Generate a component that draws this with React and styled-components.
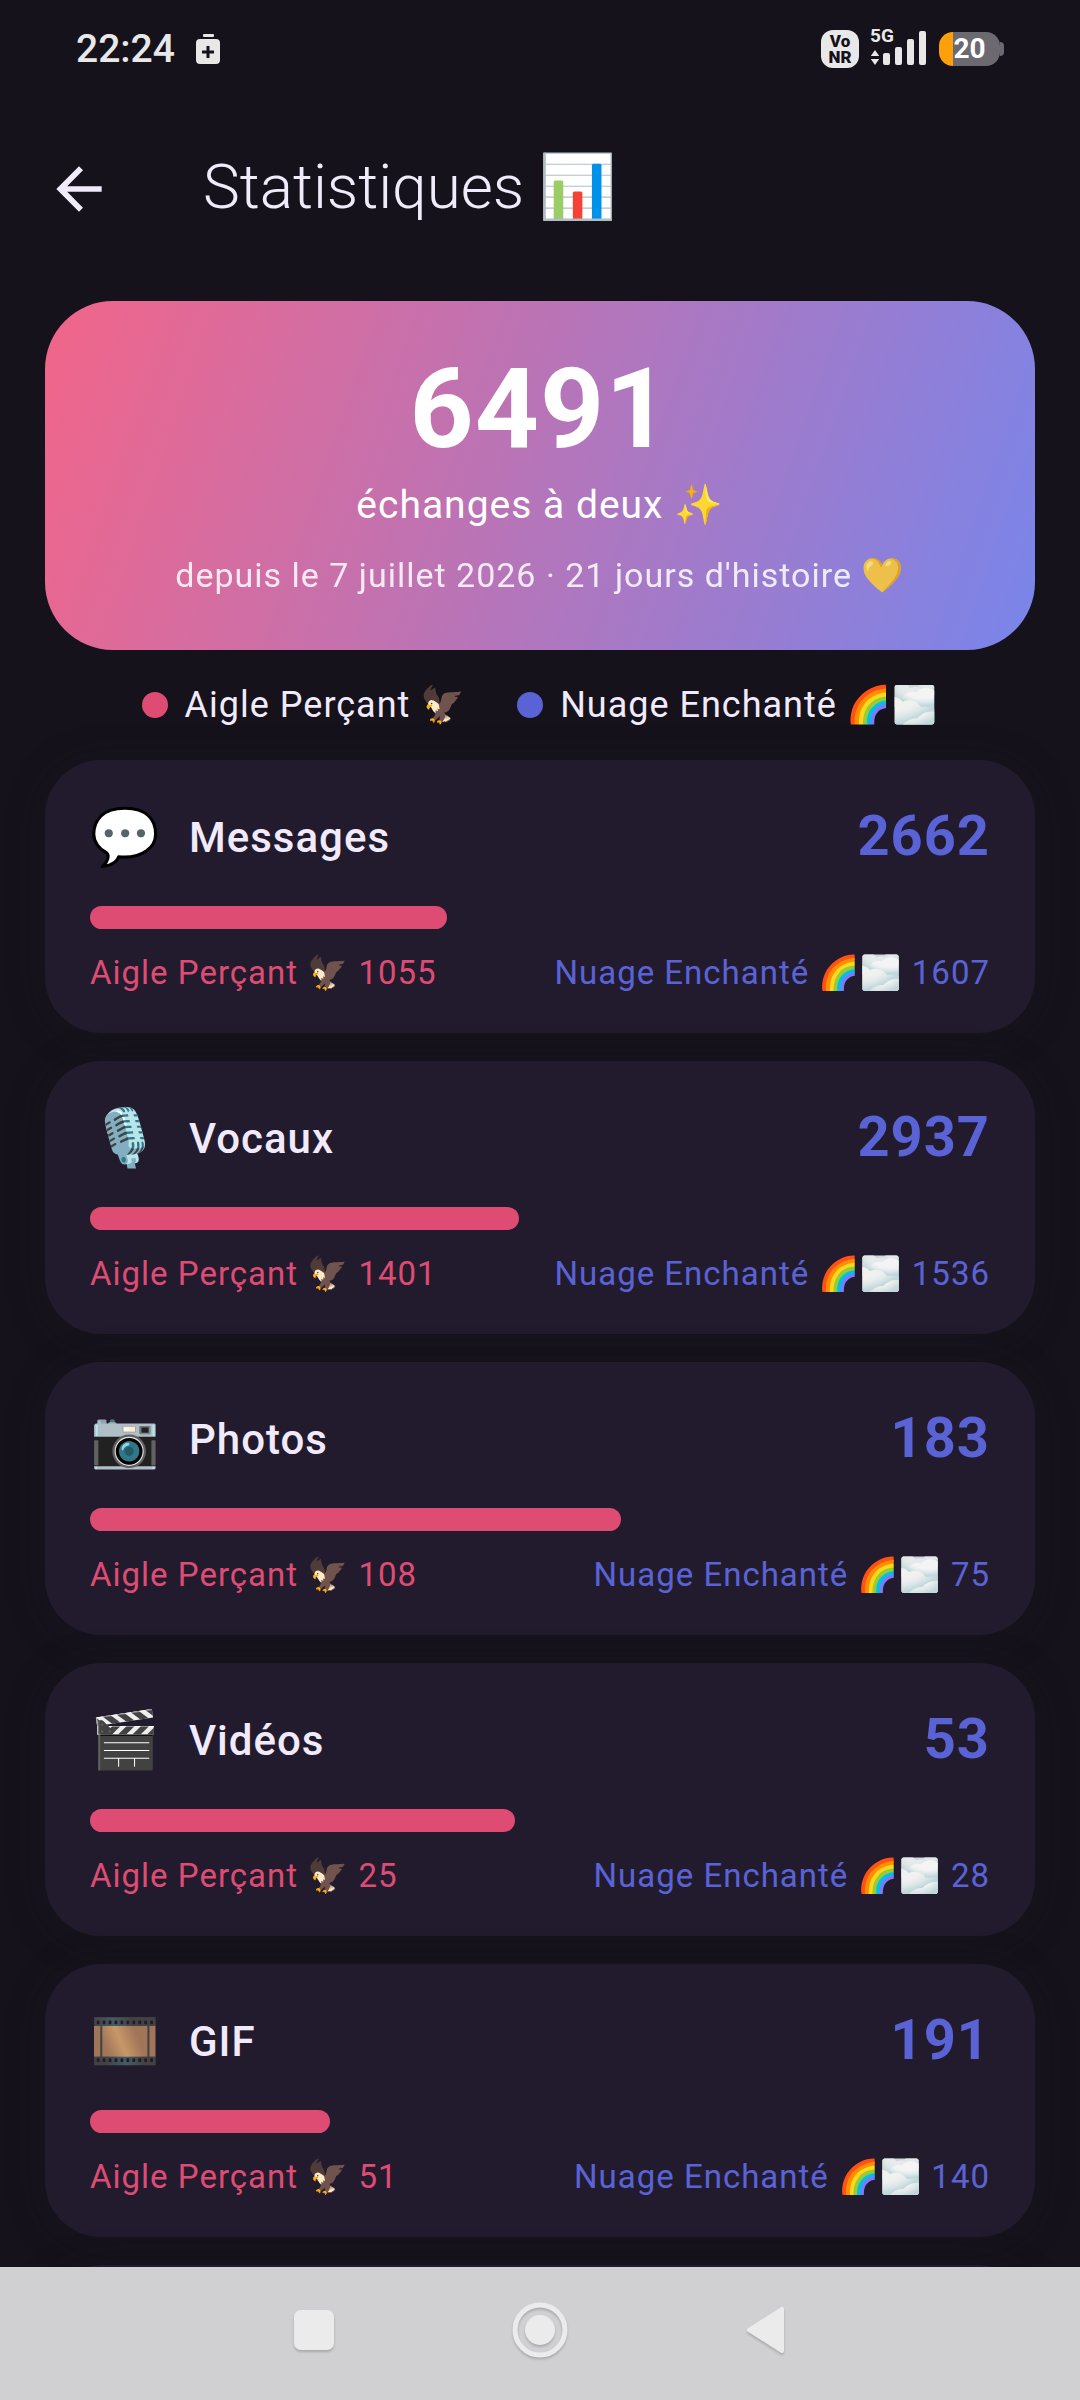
import styled, { createGlobalStyle } from "styled-components";

const AIGLE = "Aigle Perçant 🦅";
const NUAGE = "Nuage Enchanté 🌈🌫️";

const stats = [
  { icon: "💬", name: "Messages", aigle: 1055, nuage: 1607 },
  { icon: "🎙️", name: "Vocaux", aigle: 1401, nuage: 1536 },
  { icon: "📷", name: "Photos", aigle: 108, nuage: 75 },
  { icon: "🎬", name: "Vidéos", aigle: 25, nuage: 28 },
  { icon: "🎞️", name: "GIF", aigle: 51, nuage: 140 },
];

const GlobalStyle = createGlobalStyle`
  :root {
    --bg: #15121b;
    --card: #221b2e;
    --text: #f1eafa;
    --pink: #de4c74;
    --blue: #5a63d6;
  }
  * {
    box-sizing: border-box;
  }
  body {
    margin: 0;
    background: var(--bg);
    color: var(--text);
    font-family: Roboto, "Noto Color Emoji", sans-serif;
  }
  h1, h2, p, ul {
    margin: 0;
    padding: 0;
  }
  button {
    border: none;
    padding: 0;
    background: none;
    color: inherit;
    font: inherit;
  }
`;

const Screen = styled.div`
  height: 100vh;
  display: flex;
  flex-direction: column;
`;

const StatusBar = styled.div`
  flex: none;
  height: 98px;
  padding: 0 76px;
  display: flex;
  justify-content: space-between;
  align-items: center;
  color: #e8e8e8;
`;

const StatusGroup = styled.div`
  display: flex;
  align-items: center;
  gap: ${(props) => props.$gap}px;
`;

const Clock = styled.time`
  font-size: 39px;
  font-weight: 500;
  line-height: 48px;
`;

const VonrBadge = styled.div`
  width: 38px;
  height: 38px;
  border-radius: 12px;
  display: flex;
  flex-direction: column;
  justify-content: center;
  align-items: center;
  background: #e8e8e8;
  color: var(--bg);
  font-size: 17px;
  font-weight: 900;
  line-height: 16px;
`;

const Battery = styled.div`
  display: flex;
  align-items: center;
`;

const BatteryBody = styled.div`
  width: 61px;
  height: 34px;
  border-radius: 14px;
  display: flex;
  justify-content: center;
  align-items: center;
  background: linear-gradient(90deg, #ff9f0a 14px, #6b6a71 14px);
  color: #fff;
  font-size: 28px;
  font-weight: 700;
  line-height: 34px;
`;

const BatteryTip = styled.div`
  width: 4px;
  height: 14px;
  border-radius: 0 4px 4px 0;
  background: #6b6a71;
`;

const Header = styled.header`
  flex: none;
  height: 181px;
  padding: 0 45px;
  display: flex;
  align-items: center;
  gap: 90px;
`;

const BackButton = styled.button`
  width: 68px;
  height: 68px;
  display: flex;
  align-items: center;
`;

const Title = styled.h1`
  padding-bottom: 4px;
  font-size: 62px;
  font-weight: 300;
  line-height: 80px;
`;

const Content = styled.main`
  flex: 1;
  min-height: 0;
  overflow: hidden;
  padding: 22px 45px 0;
  letter-spacing: 1px;
`;

const Hero = styled.section`
  padding: 42px 45px 47px;
  border-radius: 68px;
  text-align: center;
  color: #fff;
  background: linear-gradient(109deg, #f26589, #7985ea);
`;

const HeroTotal = styled.p`
  font-size: 112px;
  font-weight: 700;
  line-height: 132px;
`;

const HeroLabel = styled.p`
  font-size: 39px;
  line-height: 60px;
`;

const HeroSince = styled.p`
  margin-top: 12px;
  font-size: 34px;
  line-height: 56px;
  opacity: 0.85;
`;

const Legend = styled.ul`
  margin: 28px 0;
  display: flex;
  justify-content: center;
  gap: 51px;
  list-style: none;
`;

const LegendItem = styled.li`
  display: flex;
  align-items: center;
  gap: 17px;
  font-size: 36px;
  line-height: 54px;
`;

const Dot = styled.span`
  width: 26px;
  height: 26px;
  border-radius: 50%;
  background: ${(props) => props.$color};
`;

const CardList = styled.div`
  display: flex;
  flex-direction: column;
  gap: 28px;
`;

const Card = styled.section`
  min-height: 273px;
  padding: 36px 45px;
  border-radius: 56px;
  background: var(--card);
  box-shadow: 0 4px 36px rgba(30, 24, 38, 0.4);
`;

const CardHead = styled.div`
  height: 82px;
  display: flex;
  align-items: center;
`;

const CardIcon = styled.span`
  width: 99px;
  font-size: 56px;
  line-height: 80px;
`;

const CardTitle = styled.h2`
  flex: 1;
  padding-top: 2px;
  font-size: 42px;
  font-weight: 500;
  line-height: 56px;
`;

const CardTotal = styled.p`
  padding-bottom: 2px;
  font-size: 56px;
  font-weight: 700;
  line-height: 80px;
  color: var(--blue);
`;

const Track = styled.div`
  height: 23px;
  margin: 28px 0 20px;
`;

const Fill = styled.div`
  height: 100%;
  border-radius: 12px;
  background: var(--pink);
`;

const Shares = styled.div`
  display: flex;
  justify-content: space-between;
  font-size: 33px;
  line-height: 48px;
`;

const Share = styled.span`
  color: ${(props) => props.$color};
`;

const NavBar = styled.nav`
  flex: none;
  height: 133px;
  padding-bottom: 8px;
  display: flex;
  justify-content: center;
  background: #d0d0d2;
`;

const NavButton = styled.button`
  width: 226px;
  display: flex;
  justify-content: center;
  align-items: center;

  svg {
    filter: drop-shadow(0 2px 1px rgba(0, 0, 0, 0.18));
  }
`;

function Signal() {
  return (
    <svg width="58" height="50" viewBox="0 0 58 50" fill="#e8e8e8">
      <text x="0" y="18" fontSize="19" fontWeight="700" fontFamily="Roboto">
        5G
      </text>
      <path d="M5 26l4.200 6H.8zM5 41l4.200-6H.8z" />
      <rect x="13" y="29" width="7" height="12" rx="2" />
      <rect x="25" y="23" width="7" height="18" rx="2" />
      <rect x="37" y="15" width="7" height="26" rx="2" />
      <rect x="49" y="7" width="7" height="34" rx="2" />
    </svg>
  );
}

function StatCard({ stat }) {
  const total = stat.aigle + stat.nuage;
  return (
    <Card>
      <CardHead>
        <CardIcon>{stat.icon}</CardIcon>
        <CardTitle>{stat.name}</CardTitle>
        <CardTotal>{total}</CardTotal>
      </CardHead>
      <Track>
        <Fill style={{ width: `${(stat.aigle / total) * 100}%` }} />
      </Track>
      <Shares>
        <Share $color="var(--pink)">
          {AIGLE} {stat.aigle}
        </Share>
        <Share $color="var(--blue)">
          {NUAGE} {stat.nuage}
        </Share>
      </Shares>
    </Card>
  );
}

export default function App() {
  return (
    <Screen>
      <GlobalStyle />
      <StatusBar>
        <StatusGroup $gap={21}>
          <Clock>22:24</Clock>
          <svg width="24" height="30" viewBox="0 0 24 30" fill="#e8e8e8">
            <rect x="7" y="0" width="11" height="3" rx="1" />
            <path
              fillRule="evenodd"
              d="M4 5h16a4 4 0 0 1 4 4v17a4 4 0 0 1-4 4H4a4 4 0 0 1-4-4V9a4 4 0 0 1 4-4zm6.500 7v4.500H6v3h4.500V24h3v-4.500H18v-3h-4.500V12z"
            />
          </svg>
        </StatusGroup>
        <StatusGroup $gap={11}>
          <VonrBadge>
            <span>Vo</span>
            <span>NR</span>
          </VonrBadge>
          <Signal />
          <Battery>
            <BatteryBody>20</BatteryBody>
            <BatteryTip />
          </Battery>
        </StatusGroup>
      </StatusBar>

      <Header>
        <BackButton aria-label="Retour">
          <svg width="68" height="68" viewBox="0 0 24 24" fill="currentColor">
            <path d="M20 11H7.830l5.590-5.590L12 4l-8 8 8 8 1.410-1.410L7.830 13H20v-2z" />
          </svg>
        </BackButton>
        <Title>Statistiques 📊</Title>
      </Header>

      <Content>
        <Hero>
          <HeroTotal>6491</HeroTotal>
          <HeroLabel>échanges à deux ✨</HeroLabel>
          <HeroSince>depuis le 7 juillet 2026 · 21 jours d'histoire 💛</HeroSince>
        </Hero>
        <Legend>
          <LegendItem>
            <Dot $color="var(--pink)" />
            {AIGLE}
          </LegendItem>
          <LegendItem>
            <Dot $color="var(--blue)" />
            {NUAGE}
          </LegendItem>
        </Legend>
        <CardList>
          {stats.map((stat) => (
            <StatCard key={stat.name} stat={stat} />
          ))}
          <Card aria-hidden="true" />
        </CardList>
      </Content>

      <NavBar>
        <NavButton aria-label="Applications récentes">
          <svg width="42" height="42" viewBox="0 0 42 42">
            <rect x="1" y="1" width="40" height="40" rx="7" fill="#ebebeb" />
          </svg>
        </NavButton>
        <NavButton aria-label="Accueil">
          <svg width="56" height="56" viewBox="0 0 56 56">
            <circle cx="28" cy="28" r="25" fill="none" stroke="#ebebeb" strokeWidth="5" />
            <circle cx="28" cy="28" r="15" fill="#ebebeb" />
          </svg>
        </NavButton>
        <NavButton aria-label="Précédent">
          <svg width="40" height="48" viewBox="0 0 40 48">
            <path
              d="M3 24L36 3v42z"
              fill="#ebebeb"
              stroke="#ebebeb"
              strokeWidth="4"
              strokeLinejoin="round"
            />
          </svg>
        </NavButton>
      </NavBar>
    </Screen>
  );
}
